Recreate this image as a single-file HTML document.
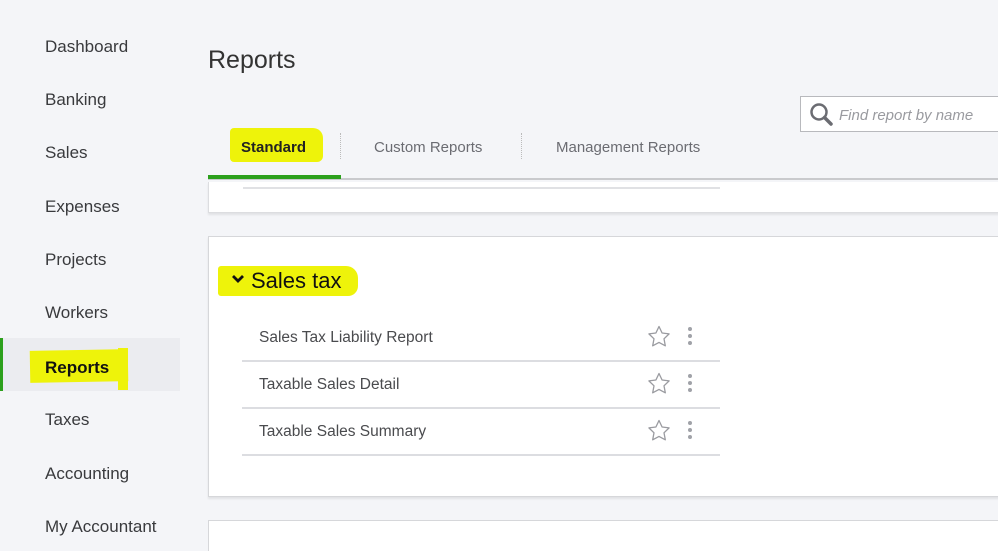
<!DOCTYPE html>
<html><head><style>
html,body{margin:0;width:998px;height:551px;overflow:hidden}
body{background:#f4f5f8;font-family:"Liberation Sans",sans-serif;position:relative;color:#393a3d}
.a{position:absolute}
.nav{left:45px;font-size:17px;line-height:20px}
.hl{background:#eef30a;position:absolute}
.row{position:absolute;left:242px;width:478px;height:46px;border-bottom:2px solid #dcdde1}
.row span{position:absolute;left:17px;top:15px;font-size:15.5px;color:#4a4b4e}
.row svg{position:absolute;left:405px;top:11px}
.dots{position:absolute;left:446px;top:13px;width:4px}
.dots i{display:block;width:4px;height:4px;border-radius:2px;background:#a0a2a8;margin-bottom:3px}
</style></head><body>
<div class="a" style="left:0;top:338px;width:180px;height:53px;background:#ebecf0"></div>
<div class="a" style="left:0;top:338px;width:3px;height:53px;background:#2ca01c"></div>
<div class="hl" style="left:30px;top:350px;width:98px;height:32px;transform:rotate(-1deg)"></div>
<div class="hl" style="left:118px;top:348px;width:10px;height:42px"></div>
<div class="a nav" style="top:37px">Dashboard</div>
<div class="a nav" style="top:90px">Banking</div>
<div class="a nav" style="top:143px">Sales</div>
<div class="a nav" style="top:197px">Expenses</div>
<div class="a nav" style="top:250px">Projects</div>
<div class="a nav" style="top:303px">Workers</div>
<div class="a nav" style="top:358px;font-weight:bold;color:#111">Reports</div>
<div class="a nav" style="top:410px">Taxes</div>
<div class="a nav" style="top:464px">Accounting</div>
<div class="a nav" style="top:517px">My Accountant</div>

<div class="a" style="left:208px;top:46px;font-size:25px;color:#333">Reports</div>

<div class="a" style="left:800px;top:96px;width:198px;height:34px;background:#fff;border:1px solid #b8b9bd;border-right:none"></div>
<svg class="a" style="left:809px;top:102px" width="26" height="26" viewBox="0 0 26 26"><circle cx="10" cy="10" r="7.5" fill="none" stroke="#6b6c72" stroke-width="2.5"/><path d="M15.5 15.5L22 22" stroke="#6b6c72" stroke-width="3.5" stroke-linecap="round"/></svg>
<div class="a" style="left:839px;top:107px;font-size:15px;font-style:italic;color:#9a9ba0">Find report by name</div>

<div class="hl" style="left:230px;top:128px;width:93px;height:34px;border-radius:4px 10px 6px 4px"></div>
<div class="a" style="left:241px;top:139px;font-size:15px;font-weight:bold;color:#222">Standard</div>
<div class="a" style="left:340px;top:133px;height:26px;border-left:1px dotted #bbb"></div>
<div class="a" style="left:374px;top:139px;font-size:15px;color:#6b6c72">Custom Reports</div>
<div class="a" style="left:521px;top:133px;height:26px;border-left:1px dotted #bbb"></div>
<div class="a" style="left:556px;top:139px;font-size:15px;color:#6b6c72">Management Reports</div>
<div class="a" style="left:208px;top:178px;width:790px;height:2px;background:#c9cacd"></div>
<div class="a" style="left:208px;top:175px;width:133px;height:4px;background:#2ca01c"></div>

<div class="a" style="left:208px;top:182px;width:790px;height:30px;background:#fff;border:1px solid #dcdde0;border-top:none;box-shadow:0 2px 2px rgba(0,0,0,.08)"></div>
<div class="a" style="left:243px;top:187px;width:477px;height:2px;background:#e0e1e4"></div>

<div class="a" style="left:208px;top:236px;width:790px;height:259px;background:#fff;border:1px solid #d6d7da;box-shadow:0 2px 2px rgba(0,0,0,.08)"></div>
<div class="hl" style="left:218px;top:266px;width:140px;height:30px;border-radius:3px 12px 10px 3px"></div>
<svg class="a" style="left:231px;top:273px" width="14" height="12" viewBox="0 0 14 12"><path d="M2 3l5 5 5-5" fill="none" stroke="#111" stroke-width="2.8"/></svg>
<div class="a" style="left:251px;top:268px;font-size:22px;color:#111">Sales tax</div>

<div class="row" style="top:314px"><span>Sales Tax Liability Report</span><svg width="24" height="22" viewBox="0 0 24 22"><path d="M12 1.5l3.1 6.5 7 .9-5.1 4.9 1.3 7-6.3-3.4-6.3 3.4 1.3-7L1.9 8.9l7-.9z" fill="none" stroke="#9a9ba0" stroke-width="1.3" stroke-linejoin="round"/></svg><div class="dots"><i></i><i></i><i></i></div></div>
<div class="row" style="top:361px"><span>Taxable Sales Detail</span><svg width="24" height="22" viewBox="0 0 24 22"><path d="M12 1.5l3.1 6.5 7 .9-5.1 4.9 1.3 7-6.3-3.4-6.3 3.4 1.3-7L1.9 8.9l7-.9z" fill="none" stroke="#9a9ba0" stroke-width="1.3" stroke-linejoin="round"/></svg><div class="dots"><i></i><i></i><i></i></div></div>
<div class="row" style="top:408px"><span>Taxable Sales Summary</span><svg width="24" height="22" viewBox="0 0 24 22"><path d="M12 1.5l3.1 6.5 7 .9-5.1 4.9 1.3 7-6.3-3.4-6.3 3.4 1.3-7L1.9 8.9l7-.9z" fill="none" stroke="#9a9ba0" stroke-width="1.3" stroke-linejoin="round"/></svg><div class="dots"><i></i><i></i><i></i></div></div>

<div class="a" style="left:208px;top:520px;width:790px;height:31px;background:#fff;border:1px solid #d6d7da;border-bottom:none"></div>
</body></html>
